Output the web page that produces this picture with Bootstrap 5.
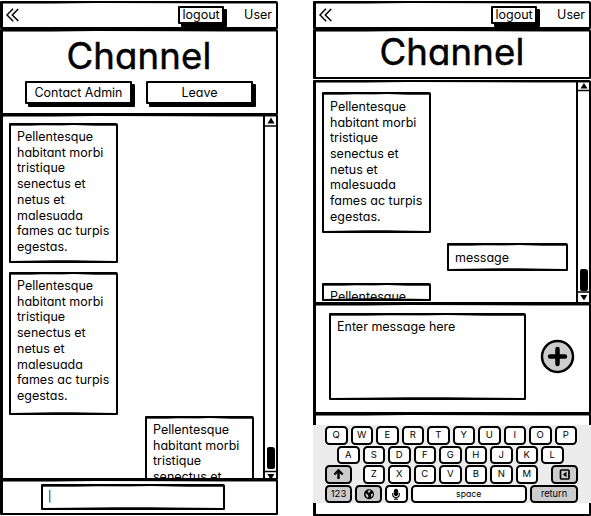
<!DOCTYPE html>
<html lang="en">
<head>
<meta charset="utf-8">
<meta name="viewport" content="width=device-width, initial-scale=1">
<title>Channel</title>
<link href="https://cdn.jsdelivr.net/npm/bootstrap@5.3.0/dist/css/bootstrap.min.css" rel="stylesheet">
<style>
  body { font-family: Inter, "Liberation Sans", sans-serif; font-feature-settings: "cv11" 1, "calt" 0; font-size: 12.5px; line-height: 15.7px; color: #000; background: #fff; overflow: hidden; }
  .phones { width: 591px; height: 516px; padding-top: 1px; }
  .phone { width: 278px; height: 515px; }
  /* hand-drawn outline: solid frame whose top and bottom strokes swell unevenly */
  .pane, .bubble, .entry, .area {
    border: 2px solid #000; border-radius: 1px 2px 1px 1px;
    background:
      linear-gradient(90deg, #555 0 18%, #bbb 30%, #999 48%, #fff0 60%, #444 80% 100%) 0 0 / 100% 1px no-repeat,
      linear-gradient(90deg, #fff0 0, #aaa 20%, #444 40% 60%, #999 75%, #fff0 100%) 0 100% / 100% 1px no-repeat, #fff;
  }
  .phone .pane {
    border-left-width: 3px; border-right-width: 2px;
    background: linear-gradient(90deg, #777 0 18%, #fff0 34%, #ccc 60%, #888 80% 100%) 0 0 / 100% 1px no-repeat, #fff;
  }
  .topbar { height: 28px; padding: 0 4px 0 3px; }
  .logout { width: 46px; height: 18px; border: 2px solid #000; box-shadow: 3px 3px 0 #000; line-height: 13px; margin-right: 20px; border-radius: 1px; background: #fff; }
  .title { font-size: 36.5px; line-height: 40px; letter-spacing: .2px; -webkit-text-stroke: .5px #000; font-weight: 400; padding-right: 1px; }
  .head-l { height: 86px; }
  .head-l .title { padding-top: 5px; }
  .head-r .title { padding-top: 1px; }
  .acts { padding-left: 22px; gap: 14px; margin-top: 5px; }
  .act { width: 107px; height: 23px; border: 2px solid #000; box-shadow: 3px 3px 0 #000; line-height: 20px; border-radius: 1px; background: #fff; }
  .head-r { height: 50px; }
  .log-l { height: 366px; margin-top: -1px; }
  .log-r { height: 225px; margin-top: 1px; }
  .msgs { padding: 7px 9px 0 6px; }
  .bubble { width: 109px; padding: 4px 0 0 6px; white-space: nowrap; flex: none; }
  .tall { height: 140px; }
  .second { height: 143px; margin-top: 9px; }
  .third { margin-top: 1px; }
  .right-msgs { padding: 10px 8px 0 6px; }
  .right-msgs .tall { height: 141px; padding-top: 5px; }
  .own { width: 121px; height: 28px; margin-top: 10px; padding-top: 5px; }
  .cut { height: 18px; margin-top: 12px; padding-top: 4px; }
  .rail { width: 13px; border-left: 2px solid #000; flex: none; }
  .arrow { height: 11px; flex: none; }
  .thumb { width: 8px; height: 22px; margin-left: 2px; background: #000; border-radius: 2px 3px 2px 2px; }
  .log-l .thumb { margin-bottom: 1px; }
  .log-l .arrow:last-child { height: 8px; }
  .foot-l { height: 36px; margin-top: -1px; z-index: 1; }
  .entry { width: 184px; height: 26px; margin: 3px 0 0 38px; padding: 3px 0 0 5px; font-size: 10.5px; }
  .compose { height: 111px; margin-top: -1px; padding: 8px 14px 0 13px; }
  .area { width: 197px; height: 87px; padding: 4px 6px; }
  .plus { margin-top: 26px; flex: none; }
  .kb-pane { height: 103px; margin-top: -1px; }
  .kb { margin: 10px -2px 0 -3px; height: 78px; background: #ececec; padding: 1px 0 0 12px; font-size: 9.5px; line-height: 14px; gap: 1px; }
  .keys { gap: 3px; height: 18.5px; }
  .key { width: 22.5px; height: 18.5px; border: 2px solid #000; border-radius: 4.5px; background: #fff; text-align: center; flex: none; }
  .key.dim { background: #ccc; }
  .k-wide { width: 27px; }
  .key svg { display: block; margin: 0 auto; }
  .row-a { padding-left: 12px; }
  .me-z { margin-right: 7.5px; }
  .del { margin-left: 9.5px; }
  .space { width: 116.5px; font-size: 8.7px; }
  .ret { width: 48px; font-size: 9.2px; }
</style>
<script src="https://cdn.jsdelivr.net/npm/bootstrap@5.3.0/dist/js/bootstrap.bundle.min.js"></script>
</head>
<body>
<div class="phones d-flex justify-content-between">

  <section class="phone d-flex flex-column">
    <header class="pane topbar d-flex align-items-center">
      <svg width="13" height="14" viewBox="0 0 13 14" fill="none" stroke="#000" stroke-width="1.5"><path d="M7 .8L1 7l6.2 6.2M12.2 1L6.3 7l6 6"/></svg>
      <div class="logout text-center ms-auto">logout</div><span>User</span>
    </header>
    <div class="pane head-l">
      <h1 class="title text-center mb-0">Channel</h1>
      <div class="d-flex acts">
        <div class="act text-center">Contact Admin</div>
        <div class="act text-center">Leave</div>
      </div>
    </div>
    <main class="pane log-l d-flex overflow-hidden">
      <div class="msgs d-flex flex-column flex-grow-1">
        <div class="bubble tall">Pellentesque<br>habitant morbi<br>tristique<br>senectus et<br>netus et<br>malesuada<br>fames ac turpis<br>egestas.</div>
        <div class="bubble second">Pellentesque<br>habitant morbi<br>tristique<br>senectus et<br>netus et<br>malesuada<br>fames ac turpis<br>egestas.</div>
        <div class="bubble tall third align-self-end">Pellentesque<br>habitant morbi<br>tristique<br>senectus et</div>
      </div>
      <div class="rail d-flex flex-column">
        <svg class="arrow" width="11" height="11" viewBox="0 0 11 11"><path d="M6 1.500L9.500 7.500H2.500z"/><path d="M0 10h11" stroke="#000" stroke-width="1.500"/></svg>
        <div class="thumb mt-auto"></div>
        <svg class="arrow" width="11" height="8" viewBox="0 0 11 8"><path d="M0 1.500h11" stroke="#000" stroke-width="1.500"/><path d="M2.300 4h7L6 10z"/></svg>
      </div>
    </main>
    <footer class="pane foot-l"><div class="entry">|</div></footer>
  </section>

  <section class="phone d-flex flex-column">
    <header class="pane topbar d-flex align-items-center">
      <svg width="13" height="14" viewBox="0 0 13 14" fill="none" stroke="#000" stroke-width="1.5"><path d="M7 .8L1 7l6.2 6.2M12.2 1L6.3 7l6 6"/></svg>
      <div class="logout text-center ms-auto">logout</div><span>User</span>
    </header>
    <div class="pane head-r"><h1 class="title text-center mb-0">Channel</h1></div>
    <main class="pane log-r d-flex overflow-hidden">
      <div class="msgs d-flex flex-column flex-grow-1 right-msgs">
        <div class="bubble tall">Pellentesque<br>habitant morbi<br>tristique<br>senectus et<br>netus et<br>malesuada<br>fames ac turpis<br>egestas.</div>
        <div class="bubble own align-self-end">message</div>
        <div class="bubble cut overflow-hidden">Pellentesque</div>
      </div>
      <div class="rail d-flex flex-column">
        <svg class="arrow" width="11" height="11" viewBox="0 0 11 11"><path d="M6 1L9.500 6.500H2.500z"/><path d="M0 8.500h11" stroke="#000" stroke-width="1.500"/></svg>
        <div class="thumb mt-auto"></div>
        <svg class="arrow" width="11" height="11" viewBox="0 0 11 11"><path d="M0 1h11" stroke="#000" stroke-width="1.500"/><path d="M2.300 4h7L6 9.500z"/></svg>
      </div>
    </main>
    <div class="pane compose d-flex justify-content-between">
      <div class="area">Enter message here</div>
      <svg class="plus" width="35" height="35" viewBox="0 0 35 35"><circle cx="17.500" cy="17.500" r="15.500" fill="#ccc" stroke="#000" stroke-width="2.500"/><path d="M17.500 10v15M10 17.500h15" stroke="#000" stroke-width="4.500" stroke-linecap="round"/></svg>
    </div>
    <div class="pane kb-pane">
      <div class="kb d-flex flex-column">
        <div class="keys d-flex"><div class="key">Q</div><div class="key">W</div><div class="key">E</div><div class="key">R</div><div class="key">T</div><div class="key">Y</div><div class="key">U</div><div class="key">I</div><div class="key">O</div><div class="key">P</div></div>
        <div class="keys row-a d-flex"><div class="key">A</div><div class="key">S</div><div class="key">D</div><div class="key">F</div><div class="key">G</div><div class="key">H</div><div class="key">J</div><div class="key">K</div><div class="key">L</div></div>
        <div class="keys d-flex">
          <div class="key dim k-wide me-z"><svg width="11" height="14" viewBox="0 0 11 14" fill="none" stroke="#000" stroke-width="2.400"><path d="M5.500 12V3.500M1.300 7.500L5.500 3.400l4.200 4.100"/></svg></div>
          <div class="key">Z</div><div class="key">X</div><div class="key">C</div><div class="key">V</div><div class="key">B</div><div class="key">N</div><div class="key">M</div>
          <div class="key dim k-wide del"><svg width="11" height="14" viewBox="0 0 11 14"><rect x="1.500" y="3" width="8.500" height="9" rx="1" fill="none" stroke="#000" stroke-width="1.700"/><path d="M7.500 4.800v5.400L3.800 7.500z"/></svg></div>
        </div>
        <div class="keys d-flex">
          <div class="key dim k-wide">123</div>
          <div class="key dim k-wide"><svg width="12" height="14" viewBox="0 0 12 14"><circle cx="6" cy="7.300" r="5"/><path d="M4.500 4l2.500-1 .5 1.300L5.700 6z M2 6.500l2.500 1L5.500 9 5 11 3.300 9.500zM8 7l2-.5-.3 2.200L8 10.300z" fill="#ccc"/></svg></div>
          <div class="key"><svg width="10" height="14" viewBox="0 0 10 14" fill="none" stroke="#000"><rect x="3.300" y="2.200" width="3.400" height="6.500" rx="1.700" fill="#000"/><path d="M1.700 6v1.200a3.300 3.300 0 0 0 6.600 0V6M5 10.500v2M3 12.300h4" stroke-width="1.100"/></svg></div>
          <div class="key space">space</div>
          <div class="key dim ret">return</div>
        </div>
      </div>
    </div>
  </section>
</div>
</body>
</html>
